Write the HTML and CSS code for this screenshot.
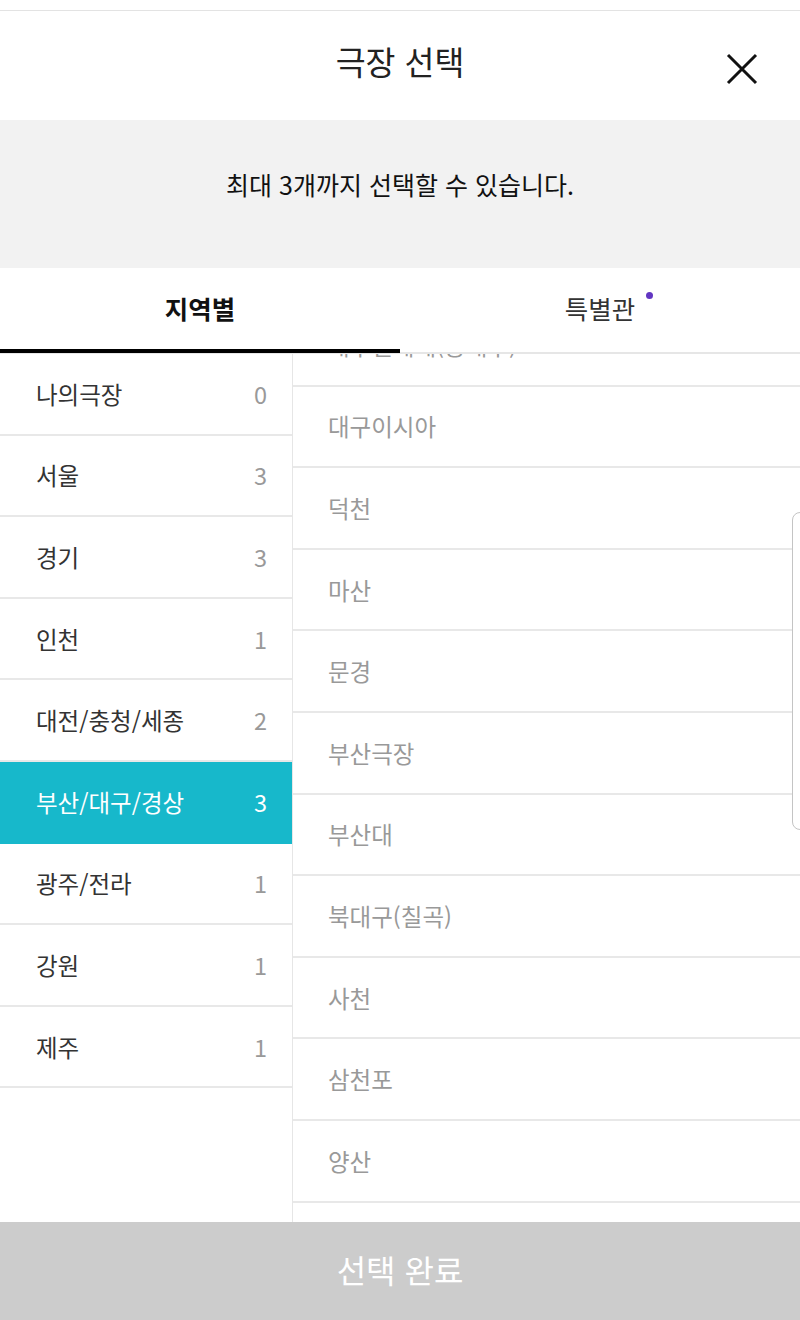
FILE: index.html
```html
<!DOCTYPE html>
<html lang="ko">
<head>
<meta charset="utf-8">
<link rel="stylesheet" href="styles.css">
</head>
<body>
<div class="page">
  <div class="topstrip"></div>
  <header class="header">
    <h1 class="title">극장 선택</h1>
    <button class="close" aria-label="닫기">
      <svg width="32" height="32" viewBox="0 0 32 32"><path d="M2 2 L30 30 M30 2 L2 30" stroke="#111" stroke-width="3" fill="none"/></svg>
    </button>
  </header>
  <div class="notice">최대 3개까지 선택할 수 있습니다.</div>
  <nav class="tabs">
    <div class="tab active">지역별</div>
    <div class="tab"><span class="tab-label">특별관<span class="dot"></span></span></div>
  </nav>
  <main class="content">
    <ul class="regions">
      <li class="region"><span>나의극장</span><span class="count">0</span></li>
      <li class="region"><span>서울</span><span class="count">3</span></li>
      <li class="region"><span>경기</span><span class="count">3</span></li>
      <li class="region"><span>인천</span><span class="count">1</span></li>
      <li class="region"><span>대전/충청/세종</span><span class="count">2</span></li>
      <li class="region selected"><span>부산/대구/경상</span><span class="count">3</span></li>
      <li class="region"><span>광주/전라</span><span class="count">1</span></li>
      <li class="region"><span>강원</span><span class="count">1</span></li>
      <li class="region"><span>제주</span><span class="count">1</span></li>
    </ul>
    <div class="theaters-wrap">
      <ul class="theaters">
        <li class="theater">대구신세계(동대구)</li>
        <li class="theater">대구이시아</li>
        <li class="theater">덕천</li>
        <li class="theater">마산</li>
        <li class="theater">문경</li>
        <li class="theater">부산극장</li>
        <li class="theater">부산대</li>
        <li class="theater">북대구(칠곡)</li>
        <li class="theater">사천</li>
        <li class="theater">삼천포</li>
        <li class="theater">양산</li>
        <li class="theater">울산</li>
      </ul>
      <div class="scrollbar"></div>
    </div>
  </main>
  <button class="submit">선택 완료</button>
</div>
</body>
</html>
```
FILE: styles.css
```css
* { box-sizing: border-box; }
html, body { margin: 0; padding: 0; }
body {
  font-family: "Noto Sans CJK KR", "Noto Sans", sans-serif;
  background: #fff;
  color: #222;
}
.page {
  width: 800px;
  height: 1320px;
  display: flex;
  flex-direction: column;
  overflow: hidden;
}
.topstrip {
  height: 11px;
  border-bottom: 1px solid #e3e3e3;
  flex: none;
}
.header {
  height: 109px;
  flex: none;
  display: flex;
  align-items: center;
  justify-content: center;
  position: relative;
}
.title {
  margin: 0;
  font-size: 32.5px;
  font-weight: 400;
  color: #222;
  line-height: 1;
  transform: translateY(-4px);
}
.close {
  position: absolute;
  right: 42px;
  top: 42px;
  width: 32px;
  height: 32px;
  padding: 0;
  border: 0;
  background: none;
}
.close svg { display: block; }
.notice {
  height: 148px;
  flex: none;
  background: #f2f2f2;
  display: flex;
  align-items: center;
  justify-content: center;
  font-size: 25px;
  color: #111;
  padding-bottom: 20px;
  line-height: 1;
}
.tabs {
  height: 86px;
  flex: none;
  display: flex;
  border-bottom: 2px solid #e6e6e6;
}
.tab {
  flex: 1;
  display: flex;
  align-items: center;
  justify-content: center;
  font-size: 25.5px;
  color: #333;
  position: relative;
  padding-bottom: 6px;
}
.tab.active {
  font-weight: 700;
  color: #111;
}
.tab.active::after {
  content: "";
  position: absolute;
  left: 0;
  right: 0;
  bottom: -1px;
  height: 4px;
  background: #000;
}
.tab-label { position: relative; }
.dot {
  position: absolute;
  right: -18px;
  top: 3px;
  width: 7px;
  height: 7px;
  border-radius: 50%;
  background: #6236c2;
}
.content {
  flex: 1;
  display: flex;
  min-height: 0;
}
.regions {
  list-style: none;
  margin: 0;
  padding: 0;
  width: 292px;
  flex: none;
}
.region {
  height: 81.6px;
  border-bottom: 2px solid #e8e8e8;
  display: flex;
  align-items: center;
  justify-content: space-between;
  padding: 0 25px 0 36px;
  font-size: 23.5px;
  color: #333;
}
.region .count { color: #999; }
.region.selected {
  background: #17b8cb;
  color: #fff;
  border-bottom-color: #17b8cb;
}
.region.selected .count { color: #fff; }
.theaters-wrap {
  flex: 1;
  border-left: 1px solid #e6e6e6;
  overflow: hidden;
  position: relative;
}
.theaters {
  list-style: none;
  margin: -49px 0 0 0;
  padding: 0;
}
.theater {
  height: 81.6px;
  border-bottom: 2px solid #e8e8e8;
  display: flex;
  align-items: center;
  padding-left: 35px;
  font-size: 23.5px;
  color: #999;
}
.scrollbar {
  position: absolute;
  right: -8px;
  top: 158px;
  width: 16px;
  height: 318px;
  border: 1px solid #c4c4c4;
  border-radius: 8px;
  background: #fff;
}
.submit {
  height: 98px;
  flex: none;
  border: 0;
  background: #cccccc;
  color: #fff;
  font-family: inherit;
  font-size: 32px;
  font-weight: 400;
  padding: 0 0 4px 0;
}
```
